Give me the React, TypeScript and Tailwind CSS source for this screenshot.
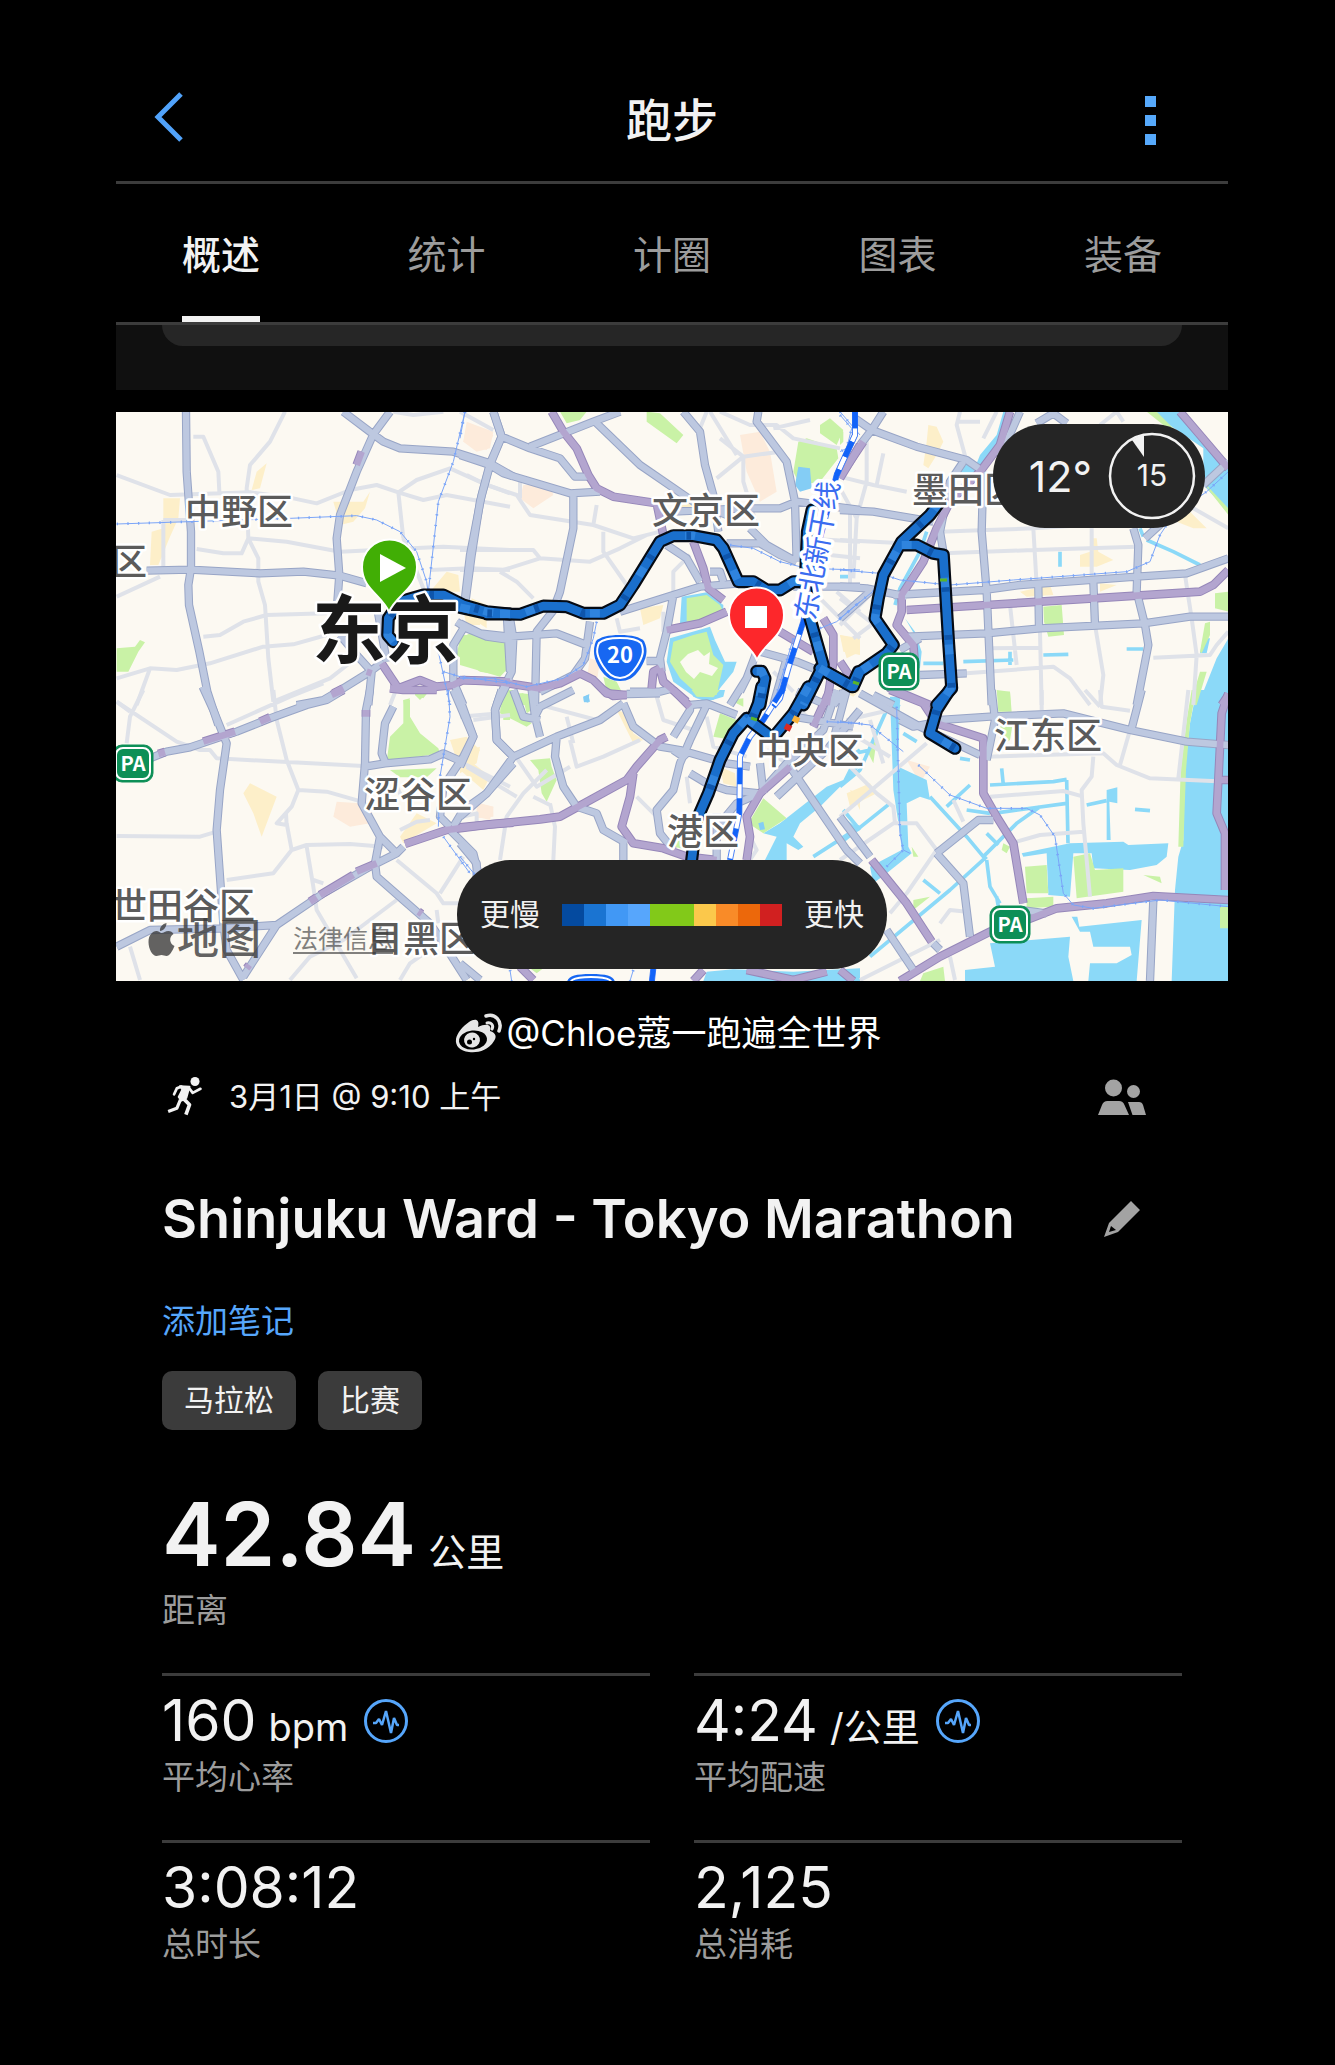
import React from "react";

type Tile = {
  at: [number, number];
  water?: string;
  waterLine?: string;
  park?: string;
  pond?: string;
  beige?: string;
  peach?: string;
  minor?: string;
  gray?: string;
  purple?: string;
  rail?: string;
  bullet?: string;
  route?: string;
};

/* The city map is stored in six tiles, three map units to one pixel. */
const tiles: Tile[] = [
  {
    at: [110, 405],
    park: "M20 730L75 725L90 705L105 712L85 740L55 800L20 800ZM1050 700L1080 685L1200 715L1195 780L1170 810L1110 800L1040 750ZM880 885L900 880L895 900L882 900ZM915 870L940 855L960 855L930 885Z",
    beige: "M160 280L210 280L205 340L180 395L145 480L120 480L125 380L160 370ZM440 200L470 175L450 250L425 255ZM670 290L760 290L780 260L765 310L730 350L690 360ZM960 560L1010 500L1045 510L1050 560ZM1085 580L1130 600L1130 670L1085 640Z",
    peach: "M1070 60L1150 90L1130 135L1060 110Z",
    minor:
      "M20 210L180 270L420 262L550 280L620 295L720 255L800 240L865 262L940 285L1010 270L1200 305M250 95L280 95L325 200L328 260M525 20L480 110L420 180L410 250L415 400L445 460L445 530L465 600L475 760L490 890M415 400L530 410L690 440L1000 425L1200 435M415 400L395 445L340 445L260 432M865 262L880 400M865 262L920 225L1020 190L1120 235L1200 265M20 575L150 515M160 345L160 490M160 345L240 345M280 695L330 690L400 650L470 630L650 625M20 820L120 790L200 795L300 775L460 725L550 718L650 690M490 890L660 820L750 750M120 790L80 900M960 495L1080 490L1200 495M1050 20L1150 75M850 20L910 30L1000 20M880 400L960 600M20 890L60 920M860 850L840 900",
    gray: "M228 20L230 200L243 380L243 490L235 540L237 600L268 740L292 860L325 960M110 497L240 494L450 505L580 500L690 512L770 535M700 20L790 88L820 110L870 130L1030 140L1140 175L1210 215M840 20L790 88L740 200L690 330L680 400L688 510L680 620M1150 20L1175 95L1140 175L1115 270L1080 450L1065 580M1040 650L1070 670L1130 695L1200 705M1060 670L1030 720L1030 830L1060 900M560 900L640 885L700 850L780 800L820 770M775 900L785 800L740 750L690 690M800 600L830 770M1160 900L1200 820M1190 620L1200 800",
    purple: "M815 775L865 850L930 825L980 845L1030 840L1060 825L1200 830M740 180L755 140M670 865L700 850M770 800L785 805",
    rail: "M20 357L240 350L540 340L740 332L800 345L870 380L920 440L950 530L955 570M1065 20L1030 170L985 290L955 560M985 740L1020 900M1000 800L1050 815L1200 835",
    route: "M850 710L833 690L835 640L870 590L940 570L1000 570L1060 600L1130 620L1200 627",
  },
  {
    at: [460, 405],
    park: "M300 20L380 20L360 45L320 55ZM560 20L600 25L670 90L650 115L560 50ZM1015 110L1040 100L1130 130L1135 160L1080 230L1020 240L1000 200ZM1080 60L1110 40L1150 75L1130 120L1080 85ZM0 690L60 690L145 710L145 790L120 815L0 780ZM130 865L190 865L200 900L125 900ZM680 580L740 570L780 600L790 620L740 640L680 650ZM640 710L700 690L740 680L760 750L790 780L770 870L715 870L660 820L630 770ZM430 815L470 830L490 870L440 860Z",
    water: "M665 575L740 562L790 600L790 630L700 655L660 655ZM630 700L750 665L765 705L795 770L830 770L820 800L780 850L760 885L710 880L640 830L620 770Z",
    pond: "M1015 185L1050 190L1055 250L1020 260L1005 240ZM370 875L385 870L390 890L372 892Z",
    beige: "M540 610L610 600L600 640L550 660ZM640 285L690 280L700 320L650 325ZM0 580L60 590L60 660L20 660ZM1140 690L1200 700L1200 750L1150 740Z",
    peach: "M20 50L100 80L90 130L50 140L10 110ZM190 240L270 240L280 270L220 310L180 280ZM840 90L900 80L930 140L950 260L900 290L860 200ZM390 760L420 770L410 830L380 820Z",
    minor:
      "M20 210L80 240L170 270L210 330L400 360L520 400L600 380M0 435L220 435L240 460L390 470L480 430L560 390M0 495L130 495L240 460M120 500L170 530L220 580M430 380L430 440L500 540M850 155L770 220M740 20L720 70M780 100L850 155L850 230L890 360M750 20L830 150M850 155L960 140M780 20L870 60L950 60L1000 100L1140 130M940 70L1050 45M690 450L640 500L640 570M180 230L180 280M400 360L410 300M1030 400L1200 410M1170 320L1170 550M470 640L480 680L540 670M610 620L610 680M1020 440L1200 460M1060 560L1200 700M1130 560L1200 620M940 800L1000 860M850 690L890 740",
    gray: "M100 20L125 95L90 180L60 290L35 450L15 600M0 150L90 180L130 205L330 265L420 260M480 20L400 50L210 125M125 95L210 130L300 160L345 215L390 215M400 45L540 180L700 290L800 330M670 20L720 80L735 180L760 270L775 380M895 20L890 50L980 170L1005 290L1010 470M640 320L850 310L960 310L1010 290L1200 315M340 265L340 370L300 560L285 600M870 370L920 420L1000 465M800 415L900 415L960 450L1010 470M620 420L680 460L720 530M480 620L640 570L720 545L840 535M1000 545L1200 545M0 655L60 685L150 695L290 685L380 720M150 640L160 700L155 800L130 850L110 900M285 610L230 680L225 900M390 650L375 760L340 810L240 860M640 570L620 680L600 760L605 800M510 860L600 860L640 850M560 768L610 768M750 500L780 500L790 530M890 740L860 820L810 900M870 800L840 860M900 740L1010 770L1060 790M980 760L940 900M1010 860L1100 900M1150 860L1120 900",
    purple: "M275 20L310 80L350 130L385 210L410 250L460 275L590 295M590 295L610 390M700 410L730 490L745 550L790 585M620 675L720 655L800 620M0 825L110 830L240 850L300 835L360 805L400 825L440 865L500 870M600 790L610 830L680 890M575 850L580 800L600 790M960 680L1060 740M1090 640L1120 690L1120 770L1100 900M1210 110L1140 215",
    rail: "M15 20L0 100M810 420L880 430L960 470L1040 490L1200 495M410 650L400 700L370 780L310 820L200 845L100 820L0 820M1080 670L1130 650L1200 590M1140 20L1200 90M1000 700L940 900",
    bullet: "M1185 20L1185 90L1130 210L1080 400L1030 650L985 790L960 880L940 905",
    route: "M150 627L80 627M0 607L80 625L180 628L250 603L320 605L370 625L430 625L480 600L520 540L600 410L640 392L700 392L770 405L790 430L835 530L880 530L920 555L960 555L1000 530L1035 530M1056 315L1042 380L1036 530L1050 640L1090 780L1060 840L1030 900M1080 790L1175 845L1195 800M890 799L905 799L915 820L900 900",
  },
  {
    at: [840, 405],
    park: "M920 20L950 20L1010 80L970 60ZM610 605L665 600L672 690L625 695L612 650ZM475 860L510 860L512 900L475 900ZM1125 565L1165 560L1165 620L1125 610ZM1090 230L1165 310L1165 330L1110 260ZM1095 655L1110 650L1110 690L1085 745L1080 740ZM1050 900L1080 800L1100 800L1070 900ZM0 70L10 80L10 110L0 120Z",
    water: "M490 20L515 20L480 120L430 190L400 200L420 150L470 90ZM335 200L400 170L410 210L350 220ZM930 20L1030 20L1165 190L1165 320L1090 240L1090 130ZM1165 700L1130 760L1090 860L1060 900L1165 900ZM195 640L225 680L245 740L240 790L210 790L230 700ZM1090 700L1110 700L1100 745L1080 745Z",
    waterLine: "M920 405L1000 440L1080 480M660 440V485M370 770L520 765M510 740V780M610 750L685 748M860 732H910M260 380L240 440L180 550L165 600M250 775L310 775M120 880L180 890M0 515L30 515M900 370L910 395",
    beige: "M265 60L290 65L310 110L290 150L265 190L250 180L260 110ZM720 450L750 440L755 400L770 400L775 440L820 465L770 485L720 485ZM1010 350L1050 320L1100 370L1060 370ZM0 690L40 700L60 740L20 760ZM540 560L630 540L640 570L560 575ZM780 535L830 540L780 560Z",
    minor:
      "M80 80L80 230L50 340L40 520M0 215L100 240L200 260M300 380L440 375L580 370L900 350M310 445L580 435L890 425M580 370L590 540M755 370L755 530M0 405L190 415M130 145L110 240M360 20L350 60L380 170M350 50L420 50M430 100L470 20M780 60L830 20L850 50M510 600L530 780M440 730L600 728M600 680L605 900M380 805L640 785L690 820L750 900M765 660L790 810L780 900M940 758L1110 750L1130 720L1165 680M1035 510L1055 640L1070 750L1060 900M1060 310L1165 370M40 700L120 640M0 580L130 680M100 560L0 660M330 810L370 805M0 250L50 340",
    gray: "M130 20L95 75L60 120M45 40L95 75L230 125L380 165L430 200M370 170L330 230L300 380L310 440M430 200L425 380L440 560L455 900M0 315L100 320L220 340L280 350M540 20L500 110L470 150M590 55L640 25L680 55M160 570L430 555L540 540L890 515L1040 505L1165 460M0 545L80 550L200 575M200 695L440 685L600 670L910 655L1050 635L1165 635M595 545L597 670M760 530L765 660M880 370L895 420L890 560L915 660L925 720L890 900M915 400L970 350M1090 240L1165 170M180 735L240 700M240 810L380 805M0 640L90 560M100 870L160 900M0 880L60 800",
    purple: "M510 20L480 120L420 200L330 290L290 370L250 470L185 570L185 620L170 660L220 720L225 780L150 850L270 900M200 615L440 600L760 580L1080 560L1120 540L1165 495M1020 20L1080 90L1165 190M60 120L0 220M1165 870L1145 900M0 770L40 830",
    rail: "M0 495L120 505L180 525L330 540L520 525L860 500L930 470L960 390L1000 330L1100 260L1165 200M0 640L110 550M0 30L35 70L20 130L0 140",
    bullet: "M45 20L45 90L-10 210",
    route: "M300 290L270 330L185 410L130 510L115 580L105 640L160 720L140 745L60 800L40 845L-60 790M185 420L230 420L280 445L310 450L325 700L335 850L290 900",
  },
  {
    at: [110, 690],
    park: "M880 30L900 30L900 80L930 130L985 175L990 190L830 215L840 140L880 100ZM840 240L980 235L950 262L870 262ZM1175 20L1200 20L1200 90L1180 90ZM915 0L960 0L940 25L915 15Z",
    beige: "M420 280L500 320L455 440L430 370L400 310ZM1020 150L1070 140L1110 180L1090 220L1140 260L1120 300L1050 240ZM870 440L920 370L980 400L880 460Z",
    peach: "M680 335L750 340L780 400L720 410L670 380ZM1110 340L1150 350L1140 390L1100 380Z",
    minor:
      "M20 35L200 155L270 180L300 180L320 205L760 228M100 0L60 80L50 160M350 105L540 20L640 -20M490 0L500 90L530 210L565 300L545 350L500 400L530 405L528 370M565 300L650 305L755 335M530 400L545 480L490 550L350 570M545 480L590 465L720 462L820 470M590 470L610 590L620 660L740 865M610 570L640 580M20 438L270 440L320 425M60 770L90 870M540 870L600 800L700 750L860 630M860 510L980 610L1000 640L1060 640M990 610L1060 500M980 660L985 700M870 870L900 820L1000 750M1060 220L1200 290M1090 90L1200 75M870 420L920 395L960 390M860 290L880 330M1060 380L1100 370L1100 400",
    gray: "M278 -10L310 60L350 160L330 300L320 420L340 700L350 780L400 870M120 205L170 185L240 172L380 125L480 85L590 45L650 30L700 0M780 0L768 60L765 220L755 340L810 440L860 490M850 50L825 100L815 190L825 215M765 230L825 220L960 208L1000 190L1045 210M1030 0L1090 140L1060 200L1000 290L990 380L1020 410M1175 0L1155 60L1160 150L1210 200M1210 220L1130 310L1060 360L1030 410M20 770L120 720L340 715L500 705M1010 410L1090 490L1110 570M810 440L795 520L800 560L880 630L960 700L1000 760L1070 870M400 860L500 705L640 610L780 530L860 490L880 470",
    purple: "M280 155L375 125M450 95L480 82M665 15L700 0M885 462L1010 420L1140 403L1210 398M630 615L730 555M740 545L800 520M145 192L165 186M600 635L620 622M925 665L935 672M768 60V80M410 835L418 825M840 -5L880 0L980 0",
    rail: "M1015 0L1020 80L990 260L985 410M1000 440L1080 550",
  },
  {
    at: [460, 690],
    park: "M125 0L160 0L190 80L215 100L200 110L120 70ZM185 10L205 12L215 60L200 70ZM210 210L270 205L275 230L290 270L260 335L245 310L235 240ZM780 70L830 90L820 150L760 140ZM910 325L980 385L910 430L865 400ZM640 440L690 450L690 480L640 470ZM695 0L780 0L760 22L710 20ZM210 835L250 835L230 850ZM810 30L850 25L850 50Z",
    water: "M690 0L795 0L790 20L740 35L700 20ZM1200 230L1080 350L1020 400L1000 440L1030 470L1015 480L980 460L980 510L915 510L950 440L910 430L960 400L1100 290L1150 270L1180 210ZM740 845L820 838L1000 845L1200 835L1200 873L730 873Z",
    waterLine: "M1200 410L1060 500M1150 360L1200 420M1170 200L1200 180",
    pond: "M895 400L910 395L915 418L900 420ZM370 20L388 12L385 38L372 35Z",
    beige: "M470 60L500 70L520 130L550 150L520 160ZM780 230L825 250L830 290L790 280ZM0 190L60 170L50 220L0 250ZM1130 -5L1200 0L1180 20ZM1170 300L1200 310L1200 360Z",
    peach: "M50 340L100 350L100 380L50 385Z",
    minor:
      "M0 80L120 70M160 190L230 290L330 230M330 150L350 230L430 200L540 150M260 240L190 310L140 380L120 510M270 340L285 410L280 510M530 320L590 380M260 50L410 90M590 20L610 90L700 120M680 260L690 340M870 440L890 480L870 510M20 230L170 320M0 360L50 340M320 80L340 160M740 80L760 170L860 200M1020 60L1080 120M920 180L1010 240M220 320L270 345",
    gray: "M-10 0L40 140L0 230M125 0L105 60L110 150L160 200L80 310L0 380M160 200L290 140L420 90L490 40M160 0L190 80L240 90M215 0L225 80L240 140M225 80L240 50L340 0M290 140L285 200L310 290L350 350L410 370L430 420L500 460M490 40L520 110L600 170L660 180L800 220L870 230M500 12L600 10M740 45L690 150L660 220L640 300L590 360L600 430L640 480M690 250L740 280L800 300L900 310M690 45L690 60L640 140M690 45L740 40L830 75M1130 0L1090 120L980 220L900 310M950 320L1100 180L1200 60M1160 0L1120 150M990 230L1160 480L1200 520M490 460V510M0 460L50 520L50 570M770 370L770 510M900 310L830 340L780 400M0 820L60 870M900 220L910 310M640 180L670 200L690 180M1000 80L1180 110",
    purple: "M0 412L240 388L300 380L500 270L530 230L600 150L620 140M520 250L510 320L485 410L520 460L610 475L680 500L770 510M430 0L460 18L500 15M640 0L690 50M1110 0L1060 110M990 230L900 310L860 380L870 440L860 510M180 830L220 870M730 840L700 873M860 840L1000 870L1100 845",
    rail: "M0 500L50 560M150 840L155 873M520 840L510 873M1100 95L1200 100",
    bullet: "M970 -5L910 90L870 140L840 200L838 370L810 510M580 835L575 880",
    route: "M905 -10L895 40L875 90M860 85L820 130L780 210L745 310L710 390L695 510M860 85L920 130M1045 -10L1000 70L950 130",
  },
  {
    at: [840, 690],
    water: "M1070 0L1165 0L1165 873L995 873L1005 600L1015 500L1030 450L1030 280L1050 100ZM545 490L690 460L850 455L865 465L985 460L980 500L950 525L870 540L760 535L755 490L700 490L690 620L625 615L620 490L550 500ZM450 760L690 740L685 800L700 873L375 873L375 840L465 830ZM695 680L712 680L718 710L905 690L890 873L745 873L750 820L830 820L875 795L870 770L760 770L750 725L720 725ZM150 20L180 20L175 230L260 270L270 330L240 320L200 340L205 470L215 490L140 550L100 580L90 530L185 480L180 430L160 300ZM800 300L832 292L832 340L808 335L812 450L800 450Z",
    waterLine: "M270 320L380 440L430 500L530 400L600 350M460 370L680 340M680 270L684 460M450 285L640 275L680 268M485 235L490 285M740 345L800 332M885 358L930 362M90 800L330 600L440 500M440 510L450 590L480 640M250 570L300 610M320 350L390 285M0 290L60 240L140 60M0 460L150 340M440 430L475 465M0 380L50 420M120 30L180 50M360 205L390 210M0 200L90 180M190 130L230 155M470 620L475 650M380 360L450 370",
    park: "M555 530L620 525L625 610L560 610ZM700 500L750 490L765 540L850 535L850 605L710 625ZM1140 650L1165 650L1165 715L1140 715ZM1068 0L1050 100L1038 240L1030 470L1015 470L1022 240L1040 90L1055 0ZM250 850L310 830L315 873L240 873ZM910 555L960 560L965 580ZM470 0L510 5L515 65L475 65ZM80 180L110 150L100 220ZM215 470L235 500L220 500ZM490 460L510 470L500 490L485 480ZM220 630L270 620L220 660ZM560 625L640 620L640 650L560 655ZM480 110L520 90L510 150L480 170Z",
    beige: "M20 310L90 280L110 310L30 350ZM1145 775L1165 770L1165 795L1145 795Z",
    peach: "M200 210L270 230L240 280Z",
    minor:
      "M440 200L790 190L830 225L930 265L1165 275M1045 0L1015 265M760 200L755 260L725 300L730 400L750 620M450 320L670 303L730 320M530 455L600 435L730 425M840 225L870 120M605 0V60M780 0L785 50L870 62M20 90L150 60M0 380L260 160M30 230L110 310L160 350L165 400M0 510L160 400L230 400L290 480L200 610L150 670M340 330L370 395M60 870L300 750M300 700L330 660L380 665M330 800L345 870M735 0L780 50M90 90L130 220M0 110L150 200",
    gray: "M0 380L90 500M280 760L300 780M60 10L150 60L240 110L420 195M300 90L450 80L670 70L870 120L1040 155L1165 165M455 0L465 90L440 210M905 0L875 115M290 490L415 390L460 390M290 490L370 580L390 740M940 630L930 873M140 720L220 840M270 100L220 110L180 90M0 40L20 0M540 660L620 670",
    purple: "M150 0L250 40L290 100L430 145L430 310L470 380L520 460L550 640M180 873L300 800L450 725L560 690L650 655L800 640L940 618L1165 630M1165 10L1145 70L1130 370L1155 430L1155 600M0 840L40 873M1140 270H1165M95 510L200 640L275 755",
    rail: "M0 95L90 105L190 185M235 225L330 315L440 355L560 355L600 375L645 440L670 610L700 645L760 655L960 630L1165 650M170 50L180 430L190 480M140 530L190 480L210 490",
    route: "M335 -10L290 60L270 130L345 175",
  },
];

type LayerKey = Exclude<keyof Tile, "at">;

function Layer({ name, ...rest }: { name: LayerKey } & React.SVGProps<SVGPathElement>) {
  return (
    <>
      {tiles.map((t) =>
        t[name] ? (
          <g key={t.at.join()} transform={`translate(${t.at[0]} ${t.at[1]}) scale(0.33333)`}>
            <path d={t[name]} fill="none" strokeLinejoin="round" {...rest} />
          </g>
        ) : null,
      )}
    </>
  );
}

const districts: [string, number, number][] = [
  ["中野区", 185, 525],
  ["文京区", 652, 524],
  ["墨田区", 912, 503],
  ["区", 111, 575],
  ["涩谷区", 364, 808],
  ["世田谷区", 111, 919],
  ["目黑区", 367, 952],
  ["中央区", 756, 764],
  ["港区", 667, 845],
  ["江东区", 994, 749],
];

function ServiceArea({ x, y }: { x: number; y: number }) {
  return (
    <g>
      <rect x={x} y={y} width="40" height="37" rx="9" fill="#0d8f57" stroke="#0d8f57" />
      <rect x={x + 3} y={y + 3} width="34" height="31" rx="7" fill="none" stroke="#fff" strokeWidth="2" />
      <text x={x + 20} y={y + 26} textAnchor="middle" fontSize="20" fontWeight="700" fill="#fff" fontFamily="Noto Sans CJK SC, sans-serif">
        PA
      </text>
    </g>
  );
}

function CityMap() {
  return (
    <svg viewBox="116 412 1112 569" className="block w-full" role="img" aria-label="东京马拉松路线图">
      <rect x="116" y="412" width="1112" height="569" fill="#fcf9f2" />
      <Layer name="beige" fill="#fdefc9" />
      <Layer name="peach" fill="#fdebdb" />
      <Layer name="water" fill="#8bd9f8" />
      <Layer name="park" fill="#c9f2a6" />
      <path d="M688 654L698 650L704 656L710 652L709 664L718 668L712 676L700 672L694 679L686 672L680 662Z" fill="#fcf9f2" />
      <Layer name="waterLine" stroke="#8bd9f8" strokeWidth="11" />
      <Layer name="pond" fill="#84cdf5" />
      <Layer name="minor" stroke="#dfe2e9" strokeWidth="12" />
      <Layer name="gray" stroke="#98a5c6" strokeWidth="25" />
      <Layer name="purple" stroke="#9687b9" strokeWidth="26" />
      <Layer name="gray" stroke="#bdc8e0" strokeWidth="19" />
      <Layer name="purple" stroke="#b3a5cf" strokeWidth="20" />
      <Layer name="rail" stroke="#7aa5f8" strokeWidth="3" />
      <Layer name="rail" stroke="#7aa5f8" strokeWidth="8" strokeDasharray="4 28" />
      <Layer name="bullet" stroke="#4d82f5" strokeWidth="18" />
      <Layer name="bullet" stroke="#fff" strokeWidth="12" />
      <Layer name="bullet" stroke="#1263f8" strokeWidth="15" strokeDasharray="50 42" />
      <Layer name="route" stroke="#060b14" strokeWidth="39" strokeLinecap="round" />
      <Layer name="route" stroke="#1a6fcc" strokeWidth="26" strokeLinecap="round" />
      <Layer name="route" stroke="#2f84de" strokeWidth="24" strokeDasharray="30 170" />
      <Layer name="route" stroke="#0e55ab" strokeWidth="24" strokeDasharray="14 130" strokeDashoffset="60" />
      <g strokeWidth="6">
        <path d="M793 718L799 721" stroke="#f9b23a" />
        <path d="M785 726L791 729" stroke="#d92a24" />
        <path d="M940 580H947M751 718L757 720M853 682L859 684" stroke="#58b52a" strokeWidth="3" />
      </g>

      <g fontFamily="Noto Sans CJK SC, sans-serif" fontWeight="500" fontSize="36" fill="#5b5b5b" stroke="#fff" strokeWidth="5" strokeLinejoin="round">
        {districts.map(([name, x, y]) => (
          <text key={name + x} x={x} y={y} style={{ paintOrder: "stroke" }}>
            {name}
          </text>
        ))}
        <text x="312" y="657" fontSize="74" fontWeight="700" fill="#191919" style={{ paintOrder: "stroke" }}>
          东京
        </text>
        <text
          transform="translate(815 621) rotate(-80)"
          fontSize="28"
          fontWeight="400"
          fill="#3a6cf0"
          strokeWidth="7"
          style={{ paintOrder: "stroke" }}
        >
          东北新干线
        </text>
      </g>

      <g strokeLinejoin="round">
        <path d="M620 635C632 635 640 637 644 641C649 651 646 659 640 669C634 678 628 681 620 681C612 681 606 678 600 669C594 659 592 651 596 641C600 637 608 635 620 635Z" fill="#1767f2" />
        <path d="M620 638C631 638 638 640 641 643C645 651 642 658 637 666C632 674 627 678 620 678C613 678 608 674 603 666C598 658 595 651 599 643C602 640 609 638 620 638Z" fill="none" stroke="#fff" strokeWidth="2" />
        <text x="620" y="663" textAnchor="middle" fontSize="22" fontWeight="700" fill="#fff" fontFamily="Noto Sans CJK SC, sans-serif">
          20
        </text>
        <path d="M567 990C565 978 569 974 591 974C613 974 617 978 615 990Z" fill="#1767f2" />
        <path d="M570 990C568 980 572 977 591 977C610 977 614 980 612 990Z" fill="#1767f2" stroke="#fff" strokeWidth="2" />
      </g>
      <ServiceArea x={879} y={653} />
      <ServiceArea x={113} y={745} />
      <ServiceArea x={990} y={906} />

      <path d="M389 612C382 595 362 589 362 567A27.500 27.500 0 0 1 417 567C417 589 396 595 389 612Z" fill="#41ae05" stroke="#fff" strokeWidth="2" />
      <path d="M380 554V582L406 568Z" fill="#fff" />
      <path d="M757 660C750 643 729 637 729 615A27.500 27.500 0 0 1 784 615C784 637 764 643 757 660Z" fill="#fd272b" stroke="#fff" strokeWidth="2" />
      <rect x="745" y="606" width="22" height="22" fill="#fff" />
    </svg>
  );
}

const paceColors = [
  "bg-[#044a9f]",
  "bg-[#1a74d2]",
  "bg-[#4198f5]",
  "bg-[#57a6fc]",
  "bg-[#82c919]",
  "bg-[#82c919]",
  "bg-[#fbc84b]",
  "bg-[#f98b28]",
  "bg-[#ec680b]",
  "bg-[#d12020]",
];

function PulseIcon() {
  return (
    <svg viewBox="0 0 44 44" className="size-11" fill="none" stroke="#56a6fb" aria-hidden="true">
      <circle cx="22" cy="22" r="20.500" strokeWidth="3" />
      <path d="M9 24H12L15 20L18 26L22 12L27 34L30 19L33 26H35" strokeWidth="2.500" strokeLinejoin="bevel" />
    </svg>
  );
}

function RunnerIcon() {
  return (
    <svg viewBox="0 0 78 88" className="h-10 w-9 shrink-0" fill="none" stroke="#f2f2f2" strokeLinejoin="round" aria-hidden="true">
      <circle cx="61" cy="10" r="10" fill="#f2f2f2" stroke="none" />
      <path d="M28 20L49 21L42 46L31 52L25 44L33 28Z" fill="#f2f2f2" strokeWidth="4" />
      <path d="M31 21L21 25L15 38" strokeWidth="6" strokeLinecap="round" />
      <path d="M47 23L56 35L73 26" strokeWidth="6" strokeLinecap="round" />
      <path d="M34 46L49 61L41 83" strokeWidth="8" />
      <path d="M29 50L21 69L2 76" strokeWidth="7" />
    </svg>
  );
}

function Metric({ value, unit, label, pulse }: { value: string; unit?: string; label: string; pulse?: boolean }) {
  return (
    <div className="border-t-[3px] border-[#3c3c3c] pt-3 pb-10">
      <dd className="flex h-[66px] items-baseline">
        <span className="text-[57px] leading-[66px]">{value}</span>
        {unit && <span className="ml-3 text-[38px] leading-10">{unit}</span>}
        {pulse && (
          <button type="button" aria-label={`查看${label}图表`} className="ml-4 self-center">
            <PulseIcon />
          </button>
        )}
      </dd>
      <dt className="text-[33px] leading-[46px] text-[#9c9c9c]">{label}</dt>
    </div>
  );
}

const tabs = ["概述", "统计", "计圈", "图表", "装备"];

export default function App() {
  return (
    <div lang="zh-CN" className="min-h-screen bg-black pr-[107px] pb-10 pl-[116px] font-['Inter','Noto_Sans_CJK_SC',sans-serif] text-[#f2f2f2]">
      <header className="grid grid-cols-[1fr_auto_1fr] items-center border-b-[3px] border-[#3c3c3c] pt-20 pr-[72px] pb-[21px] pl-[38px]">
        <button type="button" aria-label="返回" className="mb-1.5 justify-self-start">
          <svg viewBox="0 0 30 50" className="h-[50px] w-[30px]" fill="none" stroke="#51a3fb" strokeWidth="5" aria-hidden="true">
            <path d="M27 2L4 25L27 48" />
          </svg>
        </button>
        <h1 className="ml-[34px] text-[46px] leading-[80px] font-medium">跑步</h1>
        <button type="button" aria-label="更多选项" className="flex flex-col gap-2 justify-self-end">
          <span className="size-[11px] bg-[#56a9fc]" />
          <span className="size-[11px] bg-[#56a9fc]" />
          <span className="size-[11px] bg-[#56a9fc]" />
        </button>
      </header>

      <nav role="tablist" className="flex justify-between border-b-[3px] border-[#3c3c3c] px-[66px] text-[39px] leading-[42px]">
        {tabs.map((t, i) => (
          <button
            key={t}
            type="button"
            role="tab"
            aria-selected={i === 0}
            className={
              i === 0
                ? "border-b-[6px] border-[#f2f2f2] pt-[50px] pb-10 font-medium"
                : "border-b-[6px] border-transparent pt-[50px] pb-10 text-[#9c9c9c]"
            }
          >
            {t}
          </button>
        ))}
      </nav>

      <div className="bg-[#101010] px-[46px] pb-11">
        <div className="h-[21px] rounded-b-[22px] bg-[#262626]" />
      </div>

      <main>
        <section className="relative mt-[22px] overflow-hidden">
          <CityMap />
          <div className="absolute bottom-3 left-8 flex items-center text-[#3d3d3d] opacity-80">
            <svg viewBox="0 0 26 33" className="h-[33px] w-[27px]" fill="currentColor" aria-hidden="true">
              <path d="M18 0C18 4 15 8 11.500 8C11 4 14 1 18 0ZM13 10C15 10 17 8 20 8C22 8 24 9 25 11C20 14 21 21 26 23C24 28 21 33 18 33C16 33 15 32 13 32C11 32 10 33 8 33C4 33 0 26 0 19C0 12 4 8 8 8C10 8 12 10 13 10Z" />
            </svg>
            <span className="ml-0.5 text-[42px] leading-[60px] font-medium">地图</span>
            <a href="#legal" className="ml-8 text-[25px] leading-[60px] underline underline-offset-4 opacity-80">
              法律信息
            </a>
          </div>
          <div className="absolute top-3 right-[23px] flex items-center rounded-full bg-[#252525] py-2 pr-[9px] pl-9">
            <span className="text-[43px] leading-[88px]">12°</span>
            <svg viewBox="0 0 88 88" className="ml-4 size-[88px]" aria-label="风速 15">
              <circle cx="44" cy="44" r="42" fill="none" stroke="#f2f2f2" strokeWidth="2.500" />
              <path d="M24 8L36 2V25Z" fill="#f2f2f2" />
              <text x="44" y="54" textAnchor="middle" fontSize="30" fill="#f2f2f2">
                15
              </text>
            </svg>
          </div>
          <div className="absolute bottom-3 left-1/2 flex -translate-x-1/2 items-center gap-[22px] rounded-full bg-[#252525] px-[23px] py-8 text-[30px] leading-[45px] whitespace-nowrap">
            <span>更慢</span>
            <span className="flex">
              {paceColors.map((c, i) => (
                <span key={i} className={`h-[22px] w-[22px] ${c}`} />
              ))}
            </span>
            <span>更快</span>
          </div>
        </section>

        <p className="mt-7 flex items-center justify-center pr-2 text-[35px] leading-[48px] text-white">
          <svg viewBox="0 0 48 40" className="mr-1 h-10 w-12" fill="none" aria-hidden="true">
            <path d="M14 9C20 5 25 6 23 14C31 10 37 11 35 18C41 20 42 24 39 28C33 38 22 40 14 39C5 38 0 33 1 26C2 20 8 13 14 9Z" fill="#e6e6e6" />
            <ellipse cx="18" cy="27" rx="14" ry="9.500" fill="#000" transform="rotate(-6 18 27)" />
            <ellipse cx="17" cy="27" rx="8" ry="7.500" fill="#e6e6e6" transform="rotate(-15 17 27)" />
            <circle cx="14.500" cy="29" r="2.500" fill="#000" />
            <circle cx="19" cy="26" r="1.200" fill="#000" />
            <path d="M32 10C36 9 39 12 37 16" stroke="#e6e6e6" strokeWidth="3" strokeLinecap="round" />
            <path d="M31 3C40 0 48 8 44 18" stroke="#e6e6e6" strokeWidth="3.500" strokeLinecap="round" />
          </svg>
          @Chloe蔻一跑遍全世界
        </p>

        <div className="px-[46px]">
          <div className="mt-5 flex items-center justify-between pr-9">
            <div className="flex items-center gap-[26px] pl-[5px] text-[31px] leading-10">
              <RunnerIcon />
              <time>3月1日 @ 9:10 上午</time>
            </div>
            <button type="button" aria-label="参与者">
              <svg viewBox="0 0 48 36" className="h-9 w-12" fill="#a3a3a3" aria-hidden="true">
                <circle cx="15.500" cy="9" r="8.500" />
                <circle cx="35.500" cy="12.500" r="6.500" />
                <path d="M0 36L4 26Q5.500 22 9.500 22H21Q25 22 26.500 26L31 36Z" />
                <path d="M30 23H41Q44 23 45 26L48 36H34.500Z" />
              </svg>
            </button>
          </div>

          <div className="mt-[66px] flex items-center justify-between pr-[42px]">
            <h2 className="text-[54px] leading-[72px] font-semibold">Shinjuku Ward - Tokyo Marathon</h2>
            <button type="button" aria-label="编辑标题">
              <svg viewBox="0 0 36 36" className="size-9" fill="#a3a3a3" aria-hidden="true">
                <path fillRule="evenodd" d="M27 0L36 9L14 31L0 36L5 22ZM7 25L5 31L12 29Z" />
              </svg>
            </button>
          </div>

          <a href="#note" className="mt-[42px] inline-block text-[33px] leading-[48px] text-[#56a6fb]">
            添加笔记
          </a>

          <ul className="mt-[26px] flex gap-[22px] text-[30px] leading-[59px]">
            <li className="rounded-[10px] bg-[#3b3b3b] px-[22px]">马拉松</li>
            <li className="rounded-[10px] bg-[#3b3b3b] px-[22px]">比赛</li>
          </ul>

          <dl>
            <div className="mt-14 mb-[39px]">
              <dd className="flex h-24 items-baseline">
                <span className="text-[88px] leading-[96px] font-semibold">42.84</span>
                <span className="ml-3 text-[38px] leading-10">公里</span>
              </dd>
              <dt className="mt-1 text-[33px] leading-[48px] text-[#9c9c9c]">距离</dt>
            </div>
            <div className="grid grid-cols-2 gap-x-11">
              <Metric value="160" unit="bpm" label="平均心率" pulse />
              <Metric value="4:24" unit="/公里" label="平均配速" pulse />
              <Metric value="3:08:12" label="总时长" />
              <Metric value="2,125" label="总消耗" />
            </div>
          </dl>
        </div>
      </main>
    </div>
  );
}
